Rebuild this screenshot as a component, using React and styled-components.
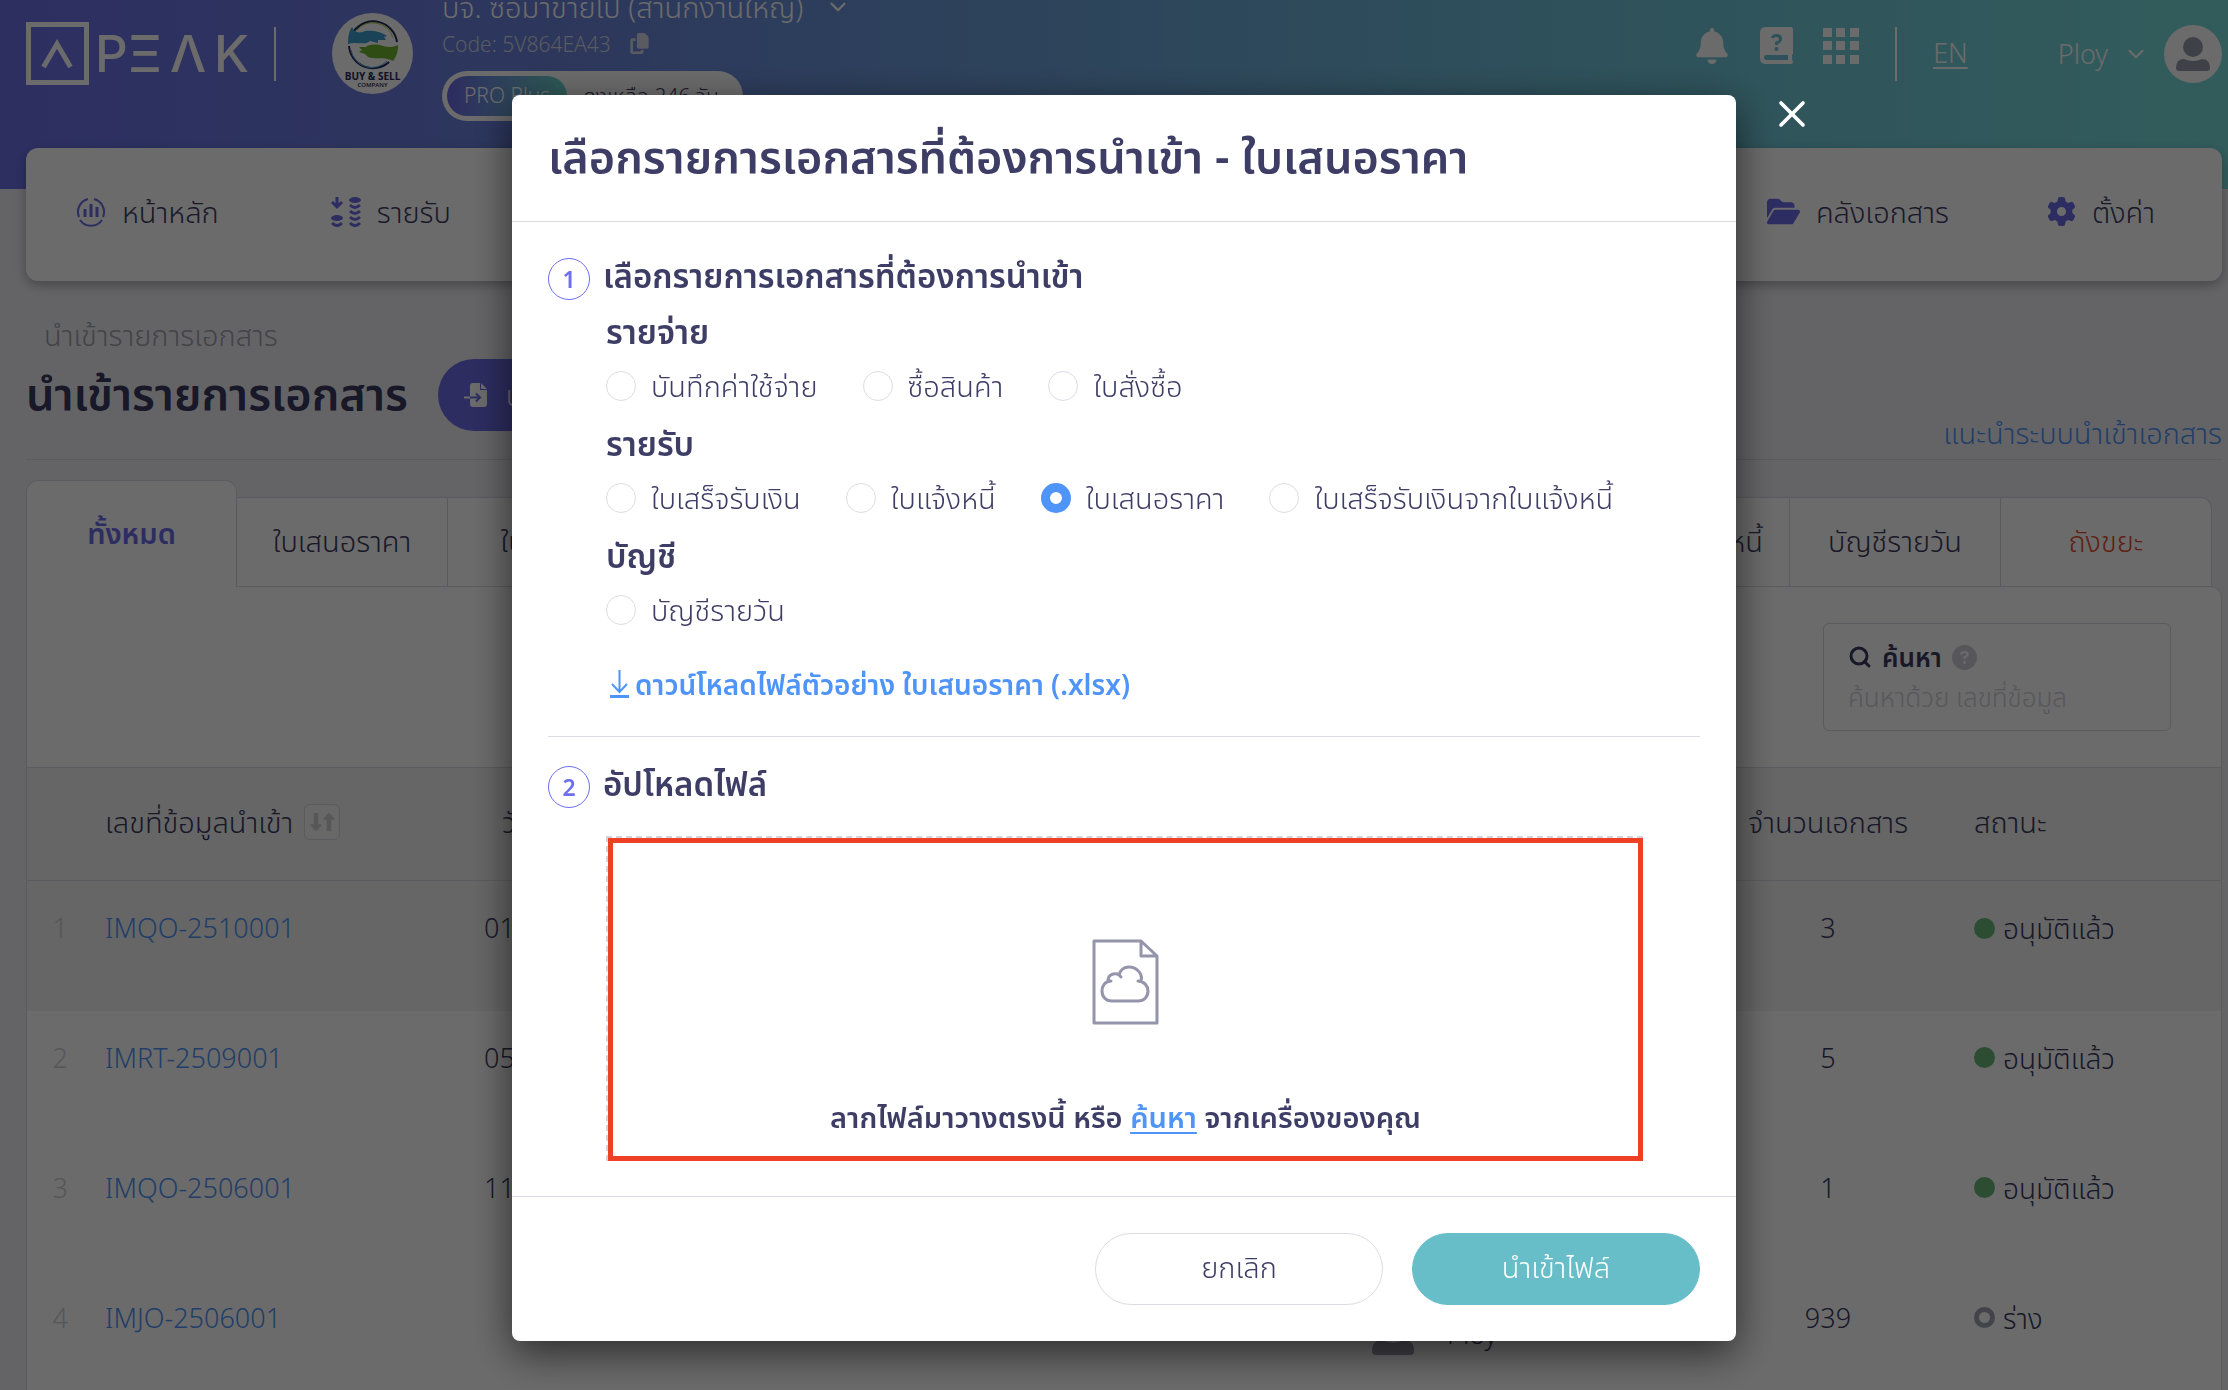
import React, { useState } from "react";
import styled, { createGlobalStyle } from "styled-components";
import { FaBell, FaCopy, FaFolderOpen, FaGear, FaCircleQuestion, FaDownLong, FaUpLong } from "react-icons/fa6";
import { ChevronDown, Search, X } from "lucide-react";

const GlobalStyle = createGlobalStyle`
  *, *::before {
    box-sizing: border-box;
  }
  body {
    margin: 0;
    background: #efeff4;
    color: #3d3d66;
    font-family: "Noto Sans", "Noto Sans Thai", "Open Sans", sans-serif;
    font-size: 29px;
    font-weight: 350;
    line-height: 36px;
  }
  button, input {
    font: inherit;
    color: inherit;
  }
  a {
    text-decoration: none;
  }
  h1, h2, h3, p {
    margin: 0;
  }
`;

const Page = styled.div`
  height: 100vh;
  overflow: hidden;
`;

const Header = styled.header`
  height: 189px;
  padding: 0 6px 0 26px;
  background: linear-gradient(90deg, #6b70e8 0%, #6b84dc 25%, #6fc0d8 70%, #78dcdc 100%);
  color: #fff;
`;

const HeaderRow = styled.div`
  height: 107px;
  display: flex;
  align-items: center;
`;

const Divider = styled.span`
  width: 2px;
  height: 54px;
  background: #fff;
`;

const CompanyLogo = styled.div`
  width: 81px;
  height: 81px;
  margin: 0 29px 0 56px;
  svg {
    display: block;
  }
`;

const Company = styled.div`
  display: flex;
  flex-direction: column;
  align-items: flex-start;
`;

const CompanyName = styled.button`
  display: flex;
  align-items: center;
  gap: 22px;
  height: 40px;
  padding: 0;
  border: 0;
  background: none;
  color: #fff;
  line-height: 40px;
`;

const CompanyCode = styled.div`
  display: flex;
  align-items: center;
  gap: 18px;
  margin-bottom: 10px;
  font-size: 21px;
  line-height: 34px;
  color: #d4d8e8;
`;

const Plan = styled.div`
  display: flex;
  align-items: center;
  height: 50px;
  padding: 5px 24px 5px 5px;
  border-radius: 25px;
  background: #fff;
  color: #3d3d66;
  font-size: 21px;
  gap: 16px;
`;

const PlanName = styled.span`
  height: 40px;
  padding: 0 17px;
  border-radius: 20px;
  line-height: 38px;
  background: linear-gradient(90deg, #6b6ae4, #6fd8cc);
  color: #fff;
`;

const Tools = styled.div`
  margin-left: auto;
  display: flex;
  align-items: center;
`;

const ToolIcons = styled.div`
  display: flex;
  align-items: center;
  gap: 30px;
  margin-right: 36px;
  padding-bottom: 16px;
`;

const IconButton = styled.button`
  display: flex;
  padding: 0;
  border: 0;
  background: none;
  color: #fff;
`;

const Language = styled.a`
  margin: 0 90px 0 36px;
  padding-bottom: 2px;
  color: #fff;
  font-size: 27px;
  text-decoration: underline;
  text-underline-offset: 4px;
`;

const User = styled.button`
  display: flex;
  align-items: center;
  gap: 15px;
  padding: 0;
  border: 0;
  background: none;
  color: #fff;
  font-size: 27px;
`;

const NavCard = styled.nav`
  display: flex;
  justify-content: space-between;
  align-items: center;
  height: 133px;
  margin: -41px 6px 0 26px;
  padding: 0 67px 6px 50px;
  border-radius: 12px;
  background: #fff;
  box-shadow: 0 4px 12px rgba(0, 0, 0, 0.3);
`;

const NavGroup = styled.div`
  display: flex;
  gap: ${({ $gap }) => $gap}px;
`;

const NavLink = styled.a`
  display: flex;
  align-items: center;
  gap: 16px;
  color: #3d3d66;
  svg {
    color: #6b6be6;
  }
`;

const Main = styled.main`
  padding: 36px 6px 0 26px;
`;

const Breadcrumb = styled.a`
  display: block;
  padding-left: 18px;
  color: #a0a0ac;
`;

const TitleRow = styled.div`
  display: flex;
  align-items: center;
  height: 107px;
  padding-bottom: 22px;
  border-bottom: 1px solid #d8d8e2;
`;

const PageTitle = styled.h1`
  margin-right: 30px;
  padding-bottom: 4px;
  color: #3a3a60;
  font-size: 45px;
  font-weight: 600;
  line-height: 60px;
`;

const ImportButton = styled.button`
  display: flex;
  align-items: center;
  gap: 18px;
  height: 72px;
  padding: 0 40px 0 26px;
  border: 0;
  border-radius: 36px;
  background: #6b6be6;
  color: #fff;
`;

const GuideLink = styled.a`
  align-self: flex-end;
  margin-left: auto;
  margin-bottom: -14px;
  color: #4f94f8;
`;

const Tabs = styled.div`
  display: flex;
  align-items: flex-end;
  margin-top: 20px;
  padding-right: 10px;
`;

const Tab = styled.button`
  flex: ${({ $wide }) => ($wide ? "1 1 0" : "0 0 211px")};
  height: ${({ $active }) => ($active ? 107 : 89)}px;
  margin-bottom: ${({ $active }) => ($active ? -1 : 0)}px;
  padding: ${({ $wide }) => ($wide ? "0 26px 2px 0" : "0 0 2px")};
  border: 1px solid #d8d8e2;
  border-bottom: 0;
  border-left-width: ${({ $active }) => ($active ? 1 : 0)}px;
  border-radius: ${({ $active, $last }) => ($active ? "12px 12px 0 0" : $last ? "0 12px 0 0" : "0")};
  background: #fff;
  color: ${({ $active, $danger }) => ($active ? "#6b6be6" : $danger ? "#e8502c" : "#3a3a60")};
  font-weight: ${({ $active }) => ($active ? 600 : 350)};
  text-align: ${({ $wide }) => ($wide ? "right" : "center")};
  white-space: nowrap;
`;

const Panel = styled.section`
  border: 1px solid #d8d8e2;
  border-radius: 0 12px 0 0;
  background: #fff;
`;

const Filters = styled.div`
  display: flex;
  justify-content: flex-end;
  height: 180px;
  padding: 36px 50px 0 0;
`;

const SearchBox = styled.div`
  width: 348px;
  height: 108px;
  padding: 15px 24px;
  border: 1px solid #d8d8e2;
  border-radius: 6px;
  font-size: 26px;
  label {
    display: flex;
    align-items: center;
    gap: 10px;
    color: #3a3a60;
    font-weight: 600;
  }
  label svg:last-child {
    color: #d0d0da;
  }
  input {
    width: 100%;
    margin-top: 4px;
    padding: 0;
    border: 0;
    outline: 0;
    background: none;
  }
  input::placeholder {
    color: #d0d0da;
    opacity: 1;
  }
`;

const Table = styled.table`
  width: 100%;
  border-collapse: collapse;
  table-layout: fixed;
  th, td {
    padding: 0;
    text-align: left;
    font-weight: 350;
    color: #3a3a60;
  }
  th {
    height: 113px;
    padding-bottom: 4px;
    border-top: 1px solid #d8d8e2;
    border-bottom: 1px solid #d8d8e2;
    background: #f2f2f4;
  }
  td {
    height: 130px;
    padding-top: 29px;
    vertical-align: top;
  }
  tbody tr:first-child td {
    background: #f2f2f2;
  }
  th.count, td.count {
    text-align: center;
  }
  th.date {
    padding-left: 18px;
  }
  th.status, td.status {
    padding-left: 53px;
  }
  td.no {
    padding-right: 37px;
    text-align: right;
    color: #ceced2;
  }
  td.no, td.code, td.date, td.count {
    font-size: 27px;
  }
  td.status {
    font-size: 28px;
  }
  td a {
    color: #4f94f8;
  }
`;

const SortLabel = styled.div`
  display: flex;
  align-items: center;
  gap: 11px;
`;

const SortButton = styled.button`
  display: flex;
  align-items: center;
  justify-content: center;
  width: 36px;
  height: 36px;
  padding: 0;
  border: 1px solid #d8d8e2;
  border-radius: 6px;
  background: #f8f8f8;
  color: #d0d0d4;
  svg + svg {
    margin-left: -5px;
  }
`;

const Creator = styled.div`
  display: flex;
  align-items: center;
  gap: 33px;
  height: 58px;
  padding-top: 10px;
  font-size: 27px;
`;

const Status = styled.span`
  display: flex;
  align-items: center;
  gap: 8px;
  &::before {
    content: "";
    width: 21px;
    height: 21px;
    border: ${({ $draft }) => ($draft ? "5px solid #a0a0b0" : "0")};
    border-radius: 50%;
    background: ${({ $draft }) => ($draft ? "transparent" : "#69b878")};
  }
`;

const Backdrop = styled.div`
  position: fixed;
  inset: 0;
  display: flex;
  justify-content: center;
  align-items: flex-start;
  padding: 95px 0 0 20px;
  background: rgba(0, 0, 0, 0.58);
`;

const Modal = styled.form`
  position: relative;
  width: 1224px;
  max-width: 90vw;
  border-radius: 8px;
  background: #fff;
  box-shadow: 0 12px 40px rgba(0, 0, 0, 0.6);
`;

const CloseButton = styled.button`
  position: absolute;
  top: -3px;
  left: calc(100% + 34px);
  display: flex;
  padding: 0;
  border: 0;
  background: none;
  color: #fff;
`;

const ModalHeader = styled.div`
  padding: 31px 36px 35px;
  border-bottom: 1px solid #dcdce6;
  h2 {
    font-size: 45px;
    font-weight: 600;
    line-height: 60px;
  }
`;

const ModalBody = styled.div`
  padding: 36px 36px 35px;
`;

const StepTitle = styled.div`
  display: flex;
  align-items: flex-start;
  gap: 13px;
  h3 {
    font-size: 33px;
    font-weight: 600;
    line-height: 36px;
  }
`;

const StepNumber = styled.span`
  width: 42px;
  height: 42px;
  border: 1px solid #6e6eee;
  border-radius: 50%;
  color: #6e6eee;
  font-size: 23px;
  font-weight: 600;
  line-height: 40px;
  text-align: center;
`;

const Groups = styled.div`
  display: flex;
  flex-direction: column;
  gap: 24px;
  padding: 14px 0 0 58px;
`;

const Group = styled.fieldset`
  min-width: 0;
  margin: 0;
  padding: 0;
  border: 0;
  legend {
    padding: 0;
    margin-bottom: 20px;
    font-size: 33px;
    font-weight: 600;
  }
`;

const Options = styled.div`
  display: flex;
  gap: 45px;
`;

const Option = styled.label`
  display: flex;
  align-items: center;
  gap: 15px;
  height: 32px;
  white-space: nowrap;
  input {
    appearance: none;
    width: 30px;
    height: 30px;
    margin: 0;
    border: 1px solid #dcdce6;
    border-radius: 50%;
    background: #fff;
  }
  input:checked {
    border: 9px solid #4f94f8;
  }
`;

const Download = styled.a`
  display: flex;
  align-items: center;
  gap: 6px;
  margin: 40px 0 34px 62px;
  color: #4f94f8;
  font-size: 28px;
  font-weight: 600;
`;

const StepTwo = styled.section`
  padding-top: 29px;
  border-top: 1px solid #dcdce6;
`;

const DropZone = styled.div`
  margin: 28px 57px 0 58px;
  border: 2px dashed #d4d4e0;
  border-right: 0;
  border-bottom: 0;
`;

const DropArea = styled.div`
  display: flex;
  flex-direction: column;
  align-items: center;
  gap: 72px;
  padding: 96px 0 19px;
  border: 5px solid #ee4024;
  p {
    line-height: 40px;
    font-weight: 600;
  }
`;

const Browse = styled.button`
  padding: 0;
  border: 0;
  background: none;
  color: #4f94f8;
  text-decoration: underline;
  text-underline-offset: 4px;
`;

const ModalFooter = styled.div`
  display: flex;
  justify-content: flex-end;
  gap: 29px;
  padding: 36px;
  border-top: 1px solid #dcdce6;
`;

const PillButton = styled.button`
  width: 288px;
  height: 72px;
  padding: 0 0 4px;
  border: 1px solid ${({ $primary }) => ($primary ? "#67bec9" : "#dcdce6")};
  border-radius: 36px;
  background: ${({ $primary }) => ($primary ? "#67bec9" : "#fff")};
  color: ${({ $primary }) => ($primary ? "#fff" : "#3d3d66")};
`;

const PeakLogo = () => (
  <svg width="248" height="64" viewBox="0 0 248 64" fill="none" aria-label="PEAK">
    <rect x="2.5" y="2.5" width="58" height="58" stroke="#fff" strokeWidth="5" />
    <path d="M17.500 45L31 22L44.500 45" stroke="#fff" strokeWidth="5" />
    <text y="50" x="69 102 144 188" fill="#fff" fontFamily="Inter, sans-serif" fontSize="51" fontWeight="500">PΞΛK</text>
  </svg>
);

const HandsLogo = () => (
  <svg width="81" height="81" viewBox="0 0 81 81" fill="none">
    <circle cx="40.500" cy="40.500" r="40.500" fill="#fff" />
    <path d="M22 18A24 24 0 0 1 65 29M17 33A24 24 0 0 0 57 49" stroke="#26265e" strokeWidth="2" />
    <path d="M25 17A21 21 0 0 1 61 25" stroke="#a6d13c" strokeWidth="1" />
    <path d="M19 37A21 21 0 0 0 55 48" stroke="#55b4e0" strokeWidth="1" />
    <path d="M20 14C22 19 27 21 33 18C39 17 49 18 55 23L52 24L54 27L46 27L46 30L38 28C32 33 24 28 16 31C16 24 17 18 20 14Z" fill="#3f9fd0" />
    <path d="M66 32C60 35 56 34 51 33C45 31 38 31 34 34L27 34L30 37L27 39L33 41L36 44C44 47 52 43 61 48C65 43 66 38 66 32Z" fill="#6fb52e" />
    <text x="40.500" y="67" textAnchor="middle" fill="#26265e" fontFamily="Open Sans, sans-serif" fontSize="10" fontWeight="700">BUY &amp; SELL</text>
    <text x="40.500" y="74" textAnchor="middle" fill="#26265e" fontFamily="Open Sans, sans-serif" fontSize="6" fontWeight="600">COMPANY</text>
  </svg>
);

const BookIcon = () => (
  <svg width="33" height="37" viewBox="0 0 33 37" fill="none">
    <path d="M6 0H31Q33 0 33 2V26Q33 28 32 28V33Q33 33 33 35Q33 37 31 37H6Q0 37 0 31V6Q0 0 6 0Z" fill="currentColor" />
    <path d="M6 28H28V33H6Q4 33 4 30.500T6 28Z" fill="#6fc0d8" />
    <path d="M12.500 11Q13 8.500 16.500 8.500Q20.500 8.500 20.500 12Q20.500 14.500 16.500 16V18" stroke="#6fc0d8" strokeWidth="3" />
    <circle cx="16.500" cy="22" r="2" fill="#6fc0d8" />
  </svg>
);

const GridIcon = () => (
  <svg width="36" height="36" viewBox="0 0 36 36" fill="currentColor">
    {[0, 13, 27].map((y) => [0, 13, 27].map((x) => <rect key={`${x}-${y}`} x={x} y={y} width="9" height="9" />))}
  </svg>
);

const Person = () => (
  <>
    <circle cx="29" cy="22" r="10" fill="#9a9aac" />
    <path d="M12 43Q12 34 20 34Q29 38 38 34Q46 34 46 43Q46 46 43 46H15Q12 46 12 43Z" fill="#9a9aac" />
  </>
);

const Avatar = () => (
  <svg width="58" height="58" viewBox="0 0 58 58">
    <circle cx="29" cy="29" r="29" fill="#fff" />
    <Person />
  </svg>
);

const PersonIcon = () => (
  <svg width="42" height="42" viewBox="12 12 34 34">
    <Person />
  </svg>
);

const HomeIcon = () => (
  <svg width="30" height="30" viewBox="0 0 30 30" fill="none" stroke="currentColor" strokeWidth="2">
    <path d="M12 2A13.300 13.300 0 0 0 3 20M18 2A13.300 13.300 0 0 1 27 20M4 23A13.300 13.300 0 0 0 26 23" />
    <path d="M9 12V20M15 7V20M21 10V20" strokeWidth="3" />
  </svg>
);

const IncomeIcon = () => (
  <svg width="30" height="30" viewBox="0 0 30 30" fill="none" stroke="currentColor" strokeWidth="2">
    <path d="M6 0V9M1 5L6 10L11 5" strokeWidth="3" />
    <ellipse cx="6" cy="21" rx="6" ry="3" fill="currentColor" stroke="none" />
    <ellipse cx="24" cy="3" rx="6" ry="3" fill="currentColor" stroke="none" />
    <path d="M1 26Q6 31 11 26M19 8Q24 13 29 8M19 14Q24 19 29 14M19 20Q24 25 29 20M19 26Q24 31 29 26" strokeWidth="3" />
  </svg>
);

const ImportIcon = () => (
  <svg width="24" height="24" viewBox="0 0 24 24">
    <path d="M9 0H16V7H23V21Q23 24 20 24H9Q6 24 6 21V3Q6 0 9 0ZM17 0L23 6H17Z" fill="currentColor" />
    <path d="M6 14.500H16M12 10.500L16 14.500L12 18.500" stroke="#6b6be6" strokeWidth="2" fill="none" />
    <path d="M0 14.500H6" stroke="currentColor" strokeWidth="2" />
  </svg>
);

const DownloadIcon = () => (
  <svg width="19" height="28" viewBox="0 0 19 28" fill="none" stroke="currentColor" strokeWidth="2">
    <path d="M9.500 0V22M2 14L9.500 22L17 14" />
    <path d="M0 26.500H19" strokeWidth="3" />
  </svg>
);

const CloudFileIcon = () => (
  <svg width="68" height="86" viewBox="1 0 68 86" fill="none" stroke="#9494aa" strokeWidth="3" strokeLinejoin="round" strokeLinecap="round">
    <path d="M3 2H50L66 17V84H3ZM50 2V17H66" />
    <path d="M20 42C14 42 11 47 11 52C11 58 15 62 21 62H47C53 62 57 58 57 52C57 47 53 42 47 42M50 42C52 35 46 28 38 28C33 28 29 31 28 36C25 34 17 34 17 42M28 36L30 38" />
  </svg>
);

const groups = [
  { title: "รายจ่าย", options: ["บันทึกค่าใช้จ่าย", "ซื้อสินค้า", "ใบสั่งซื้อ"] },
  { title: "รายรับ", options: ["ใบเสร็จรับเงิน", "ใบแจ้งหนี้", "ใบเสนอราคา", "ใบเสร็จรับเงินจากใบแจ้งหนี้"] },
  { title: "บัญชี", options: ["บัญชีรายวัน"] },
];

const rows = [
  { code: "IMQO-2510001", date: "01/10/2025", count: 3, status: "อนุมัติแล้ว" },
  { code: "IMRT-2509001", date: "05/09/2025", count: 5, status: "อนุมัติแล้ว" },
  { code: "IMQO-2506001", date: "11/06/2025", count: 1, status: "อนุมัติแล้ว" },
  { code: "IMJO-2506001", date: "", count: 939, status: "ร่าง", draft: true },
];

const App = () => {
  const [type, setType] = useState("ใบเสนอราคา");

  return (
    <>
      <GlobalStyle />
      <Page>
        <Header>
          <HeaderRow>
            <PeakLogo />
            <Divider />
            <CompanyLogo><HandsLogo /></CompanyLogo>
            <Company>
              <CompanyName>
                บจ. ซื้อมาขายไป (สำนักงานใหญ่)
                <ChevronDown size={26} />
              </CompanyName>
              <CompanyCode>Code: 5V864EA43 <FaCopy /></CompanyCode>
              <Plan>
                <PlanName>PRO Plus</PlanName>
                คงเหลือ 246 วัน
              </Plan>
            </Company>
            <Tools>
              <ToolIcons>
                <IconButton aria-label="notifications"><FaBell size={36} /></IconButton>
                <IconButton aria-label="help"><BookIcon /></IconButton>
                <IconButton aria-label="apps"><GridIcon /></IconButton>
              </ToolIcons>
              <Divider />
              <Language href="#en">EN</Language>
              <User>
                Ploy
                <ChevronDown size={26} />
                <Avatar />
              </User>
            </Tools>
          </HeaderRow>
        </Header>

        <NavCard>
          <NavGroup $gap={112}>
            <NavLink href="#home"><HomeIcon />หน้าหลัก</NavLink>
            <NavLink href="#income"><IncomeIcon />รายรับ</NavLink>
          </NavGroup>
          <NavGroup $gap={98}>
            <NavLink href="#files"><FaFolderOpen size={33} />คลังเอกสาร</NavLink>
            <NavLink href="#settings"><FaGear size={29} />ตั้งค่า</NavLink>
          </NavGroup>
        </NavCard>

        <Main>
          <Breadcrumb href="#import">นำเข้ารายการเอกสาร</Breadcrumb>
          <TitleRow>
            <PageTitle>นำเข้ารายการเอกสาร</PageTitle>
            <ImportButton><ImportIcon />นำเข้าเอกสาร</ImportButton>
            <GuideLink href="#guide">แนะนำระบบนำเข้าเอกสาร</GuideLink>
          </TitleRow>

          <Tabs>
            <Tab $active>ทั้งหมด</Tab>
            <Tab>ใบเสนอราคา</Tab>
            <Tab>ใบแจ้งหนี้</Tab>
            <Tab $wide>ใบเสร็จรับเงินจากใบแจ้งหนี้</Tab>
            <Tab>บัญชีรายวัน</Tab>
            <Tab $danger $last>ถังขยะ</Tab>
          </Tabs>

          <Panel>
            <Filters>
              <SearchBox>
                <label htmlFor="search">
                  <Search size={24} strokeWidth={3} />
                  ค้นหา
                  <FaCircleQuestion size={25} />
                </label>
                <input id="search" placeholder="ค้นหาด้วย เลขที่ข้อมูล" />
              </SearchBox>
            </Filters>
            <Table>
              <colgroup>
                <col width="78" />
                <col width="379" />
                <col />
                <col width="363" />
                <col width="186" />
                <col width="300" />
              </colgroup>
              <thead>
                <tr>
                  <th></th>
                  <th>
                    <SortLabel>
                      เลขที่ข้อมูลนำเข้า
                      <SortButton type="button" aria-label="sort">
                        <FaDownLong size={18} />
                        <FaUpLong size={18} />
                      </SortButton>
                    </SortLabel>
                  </th>
                  <th className="date">วันที่</th>
                  <th></th>
                  <th className="count">จำนวนเอกสาร</th>
                  <th className="status">สถานะ</th>
                </tr>
              </thead>
              <tbody>
                {rows.map((row, i) => (
                  <tr key={row.code}>
                    <td className="no">{i + 1}</td>
                    <td className="code"><a href={`#${row.code}`}>{row.code}</a></td>
                    <td className="date">{row.date}</td>
                    <td>
                      <Creator><PersonIcon />Ploy</Creator>
                    </td>
                    <td className="count">{row.count}</td>
                    <td className="status"><Status $draft={row.draft}>{row.status}</Status></td>
                  </tr>
                ))}
              </tbody>
            </Table>
          </Panel>
        </Main>
      </Page>

      <Backdrop>
        <Modal role="dialog" aria-modal="true" onSubmit={(e) => e.preventDefault()}>
          <CloseButton type="button" aria-label="close"><X size={44} strokeWidth={2} /></CloseButton>
          <ModalHeader>
            <h2>เลือกรายการเอกสารที่ต้องการนำเข้า - {type}</h2>
          </ModalHeader>
          <ModalBody>
            <StepTitle>
              <StepNumber>1</StepNumber>
              <h3>เลือกรายการเอกสารที่ต้องการนำเข้า</h3>
            </StepTitle>
            <Groups>
              {groups.map((group) => (
                <Group key={group.title}>
                  <legend>{group.title}</legend>
                  <Options>
                    {group.options.map((name) => (
                      <Option key={name}>
                        <input type="radio" name="type" checked={type === name} onChange={() => setType(name)} />
                        {name}
                      </Option>
                    ))}
                  </Options>
                </Group>
              ))}
            </Groups>
            <Download href="#example"><DownloadIcon />ดาวน์โหลดไฟล์ตัวอย่าง {type} (.xlsx)</Download>

            <StepTwo>
              <StepTitle>
                <StepNumber>2</StepNumber>
                <h3>อัปโหลดไฟล์</h3>
              </StepTitle>
              <DropZone>
                <DropArea>
                  <CloudFileIcon />
                  <p>ลากไฟล์มาวางตรงนี้ หรือ <Browse type="button">ค้นหา</Browse> จากเครื่องของคุณ</p>
                </DropArea>
              </DropZone>
            </StepTwo>
          </ModalBody>
          <ModalFooter>
            <PillButton type="button">ยกเลิก</PillButton>
            <PillButton type="submit" $primary>นำเข้าไฟล์</PillButton>
          </ModalFooter>
        </Modal>
      </Backdrop>
    </>
  );
};

export default App;
